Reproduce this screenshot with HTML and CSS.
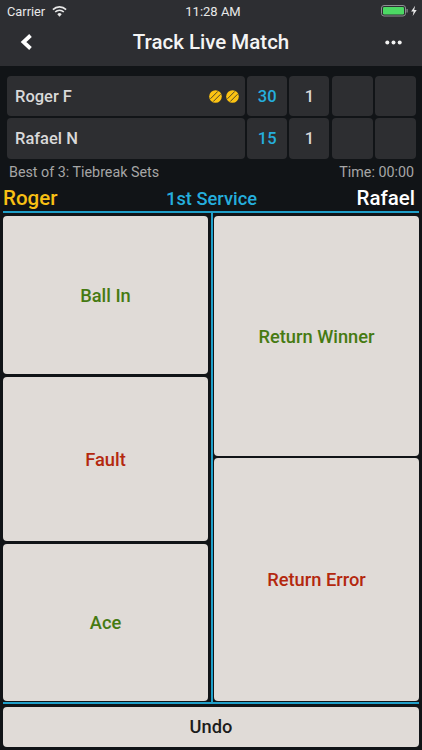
FILE: index.html
```html
<!DOCTYPE html>
<html lang="en">
<head>
<meta charset="utf-8">
<title>Track Live Match</title>
<link rel="stylesheet" href="styles.css">
</head>
<body>
<div class="app">
  <header class="top">
    <div class="status">
      <div class="status-left">
        <span>Carrier</span>
        <svg class="wifi" viewBox="0 0 16 12" width="15" height="11"><path d="M8 11.600 5.600 8.900a3.400 3.400 0 0 1 4.800 0z" fill="#e8e8e8"/><path d="M3.900 7.200a5.800 5.800 0 0 1 8.200 0l1.200-1.300a7.600 7.600 0 0 0-10.600 0z" fill="#e8e8e8"/><path d="M1.400 4.600a9.300 9.300 0 0 1 13.200 0l1.200-1.300a11 11 0 0 0-15.600 0z" fill="#e8e8e8"/></svg>
      </div>
      <div class="clock">11:28 AM</div>
      <div class="status-right">
        <svg viewBox="0 0 36 12" width="36" height="12"><rect x=".5" y=".5" width="24" height="10.500" rx="2.500" fill="none" stroke="#8d8f92"/><rect x="2" y="2" width="21" height="7.500" rx="1.200" fill="#4cd964"/><rect x="25.500" y="4" width="1.200" height="3.500" fill="#8d8f92"/><path d="M34.100 .8 30.100 6.600h2.500l-.9 4.400 4-5.900h-2.500z" fill="#e8e8e8"/></svg>
      </div>
    </div>
    <nav class="nav">
      <svg class="back" viewBox="0 0 14 16" width="14" height="16"><path d="M10.500 1.500 3.500 8l7 6.500" fill="none" stroke="#fff" stroke-width="3.800"/></svg>
      <h1 class="title">Track Live Match</h1>
      <svg class="more" viewBox="0 0 17 5" width="17" height="5"><circle cx="2.300" cy="2.500" r="2" fill="#f2f2f2"/><circle cx="8.500" cy="2.500" r="2" fill="#f2f2f2"/><circle cx="14.700" cy="2.500" r="2" fill="#f2f2f2"/></svg>
    </nav>
  </header>

  <section class="score">
    <div class="cell name"><span>Roger F</span>
      <span class="balls">
        <svg viewBox="0 0 14 14" width="13" height="13"><circle cx="7" cy="7" r="6.800" fill="#fcc312"/><path d="M1.500 9.500 9.500 1.500M4.500 12.500 12.500 4.500" stroke="#2d2e31" stroke-width=".9"/></svg>
        <svg viewBox="0 0 14 14" width="13" height="13"><circle cx="7" cy="7" r="6.800" fill="#fcc312"/><path d="M1.500 9.500 9.500 1.500M4.500 12.500 12.500 4.500" stroke="#2d2e31" stroke-width=".9"/></svg>
      </span>
    </div>
    <div class="cell num blue">30</div>
    <div class="cell num">1</div>
    <div class="cell"></div>
    <div class="cell"></div>
    <div class="cell name"><span>Rafael N</span></div>
    <div class="cell num blue">15</div>
    <div class="cell num">1</div>
    <div class="cell"></div>
    <div class="cell"></div>
  </section>

  <div class="info"><span>Best of 3: Tiebreak Sets</span><span>Time: 00:00</span></div>

  <div class="players">
    <span class="server">Roger</span>
    <span class="phase">1st Service</span>
    <span class="receiver">Rafael</span>
  </div>

  <main class="actions">
    <div class="col col-left">
      <button class="btn green h-ball">Ball In</button>
      <button class="btn red h-fault">Fault</button>
      <button class="btn green h-ace">Ace</button>
    </div>
    <div class="col col-right">
      <button class="btn green h-win">Return Winner</button>
      <button class="btn red h-err">Return Error</button>
    </div>
  </main>

  <div class="undo-wrap"><button class="btn undo">Undo</button></div>
</div>
</body>
</html>
```
FILE: styles.css
```css
* { box-sizing: border-box; }
html, body { margin: 0; padding: 0; }
body { background: #111417; font-family: Roboto, "Liberation Sans", sans-serif; }
.app { width: 422px; height: 750px; display: flex; flex-direction: column; overflow: hidden; }

.top { background: #2d2e32; height: 66px; color: #e8e8e8; }
.status { height: 22px; padding: 0 5px 0 7px; display: grid; grid-template-columns: 1fr auto 1fr; align-items: center; font-size: 12.800px; }
.status-left { display: flex; align-items: center; gap: 7px; }
.clock { font-size: 13px; font-weight: 400; margin-left: 2px; }
.status-right { display: flex; justify-content: flex-end; }
.nav { height: 44px; padding: 0 20px 4px 20px; display: flex; align-items: center; justify-content: space-between; }
.back { margin-right: 3px; }
.title { margin: 0; font-size: 20.500px; font-weight: 500; color: #f4f4f4; }

.score { margin: 10px 6px 0 7px; display: grid; grid-template-columns: 238px 40px 40px 41px 41px; grid-template-rows: 40px 41px; gap: 2px 2.200px; }
.cell { background: #2d2e31; border-radius: 4px; display: flex; align-items: center; color: #d9d9d9; font-size: 16.500px; font-weight: 500; }
.name { justify-content: space-between; padding: 0 6px 0 8px; }
.num { justify-content: center; }
.blue { color: #25aedd; }
.balls { display: flex; gap: 4px; }
.balls svg { display: block; }

.info { margin-top: 4px; padding: 0 8px 0 9px; height: 17px; display: flex; justify-content: space-between; align-items: center; font-size: 14.300px; color: #a6a6a6; }

.players { height: 33px; margin: 0 3px; padding: 5px 4px 0 0; display: grid; grid-template-columns: 1fr auto 1fr; align-items: center; font-size: 20.500px; font-weight: 500; border-bottom: 2px solid #1f9fc9; }
.server { color: #f8c014; }
.phase { color: #25aedd; font-size: 18.300px; margin-left: 5px; }
.receiver { color: #fff; text-align: right; }

.actions { margin: 0 3px; display: grid; grid-template-columns: 208px 208px; height: 491px; border-bottom: 2px solid #1f9fc9; }
.col { display: flex; flex-direction: column; }
.col-left { padding-top: 3px; gap: 3px; }
.col-right { padding: 3px 0 0 1px; border-left: 2px solid #1f9fc9; gap: 2px; }
.btn { border: 0; padding: 0; background: #e0dbd7; border-radius: 4px; font-family: inherit; font-size: 18.300px; font-weight: 500; }
.col-left .btn { width: 205px; }
.col-right .btn { width: 205px; }
.green { color: #467a12; }
.red { color: #b4280e; }
.h-ball { height: 158px; }
.h-fault { height: 164px; }
.h-ace { height: 157px; }
.h-win { height: 240px; }
.h-err { height: 243px; }

.undo-wrap { margin: 3px 3px 0; }
.undo { height: 39.500px; color: #1c1c1c; width: 416px; }
```
